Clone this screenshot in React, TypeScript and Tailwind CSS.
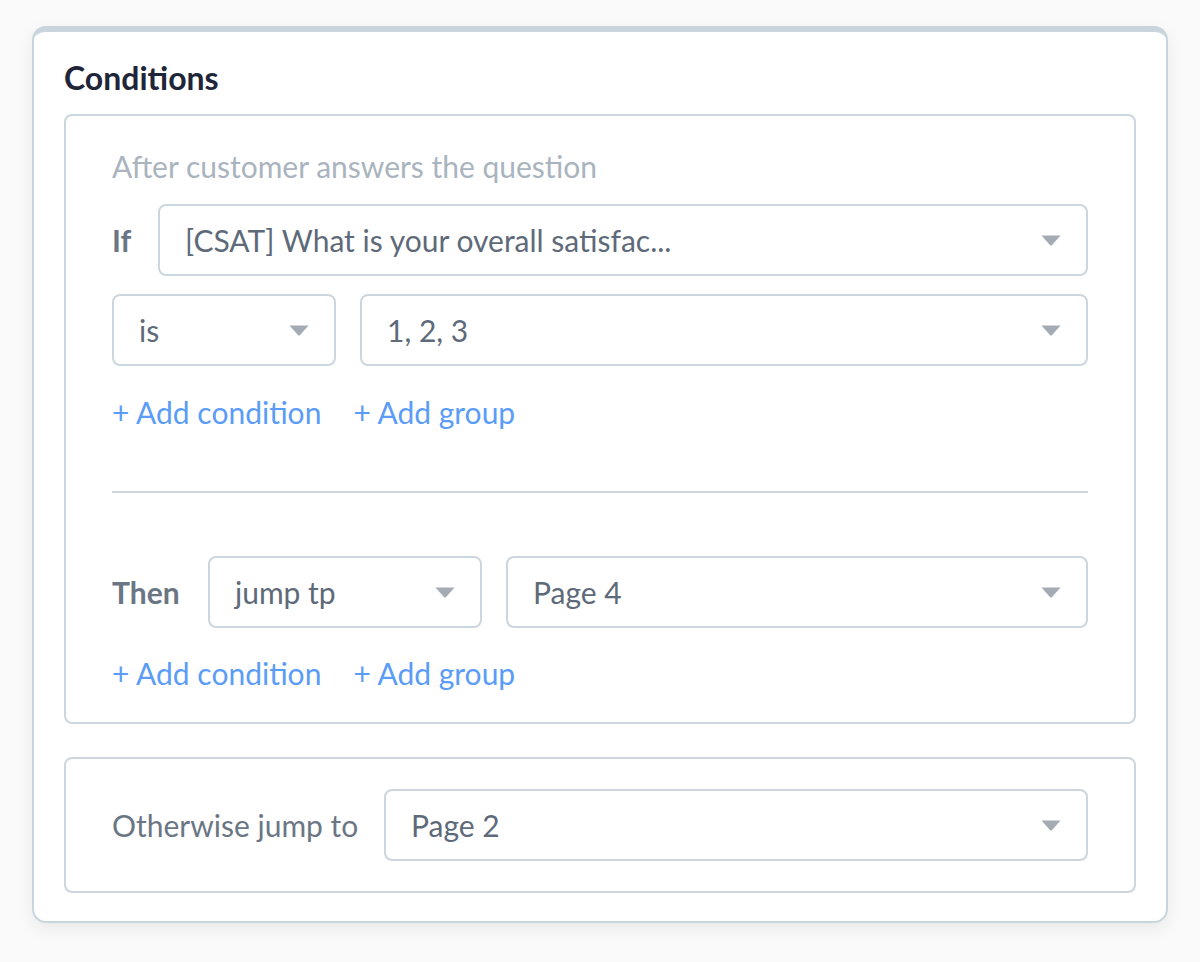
import React from "react";

const Arrow = () => (
  <svg width="20" height="11" viewBox="0 0 20 11" className="shrink-0">
    <path d="M0.5 0.5 H19.5 L10.9 10.2 Q10 11 9.1 10.2 Z" fill="#a4abb5" />
  </svg>
);

const Select = ({ text, className = "" }: { text: string; className?: string }) => (
  <div
    className={`h-[72px] border-2 border-[#cbd6de] rounded-[8px] bg-white flex items-center justify-between pl-[25px] pr-[25px] ${className}`}
  >
    <span className="text-[30px] leading-[36px] text-[#5e6a79] whitespace-nowrap">{text}</span>
    <Arrow />
  </div>
);

const Links = () => (
  <div className="flex items-center gap-[32px] text-[30px] leading-[36px] text-[#5b9cf7]">
    <span>+ Add condition</span>
    <span>+ Add group</span>
  </div>
);

export default function App() {
  return (
    <div
      className="min-h-[962px] w-[1200px] bg-[#fafafa] pt-[26px] pl-[32px]"
      style={{ fontFamily: "Lato, 'Noto Sans', sans-serif" }}
    >
      <div className="w-[1136px] bg-white border-2 border-t-[6px] border-[#c9d5dd] rounded-[14px] shadow-[0_6px_18px_rgba(0,0,0,0.07)] px-[30px] pt-[26px] pb-[28px]">
        <h2 className="text-[32px] leading-[40px] font-bold text-[#1f2639]">Conditions</h2>
        <div className="mt-[16px] border-2 border-[#cbd6de] rounded-[8px] px-[46px] pt-[32px] pb-[31px]">
          <div className="text-[30px] leading-[36px] text-[#a9b4be]">After customer answers the question</div>
          <div className="mt-[20px] flex items-center">
            <span className="w-[46px] shrink-0 text-[30px] font-bold text-[#6b7685]">If</span>
            <Select text="[CSAT] What is your overall satisfac..." className="flex-1" />
          </div>
          <div className="mt-[18px] flex items-center gap-[24px]">
            <Select text="is" className="w-[224px]" />
            <Select text="1, 2, 3" className="flex-1" />
          </div>
          <div className="mt-[28px]">
            <Links />
          </div>
          <div className="mt-[61px] h-[2px] bg-[#cbd6de]" />
          <div className="mt-[63px] flex items-center">
            <span className="w-[96px] shrink-0 text-[30px] font-bold text-[#6b7685]">Then</span>
            <Select text="jump tp" className="w-[274px]" />
            <Select text="Page 4" className="flex-1 ml-[24px]" />
          </div>
          <div className="mt-[27px]">
            <Links />
          </div>
        </div>
        <div className="mt-[33px] border-2 border-[#cbd6de] rounded-[8px] px-[46px] pt-[30px] pb-[30px] flex items-center">
          <span className="w-[272px] shrink-0 text-[30px] text-[#6b7685]">Otherwise jump to</span>
          <Select text="Page 2" className="flex-1" />
        </div>
      </div>
    </div>
  );
}
